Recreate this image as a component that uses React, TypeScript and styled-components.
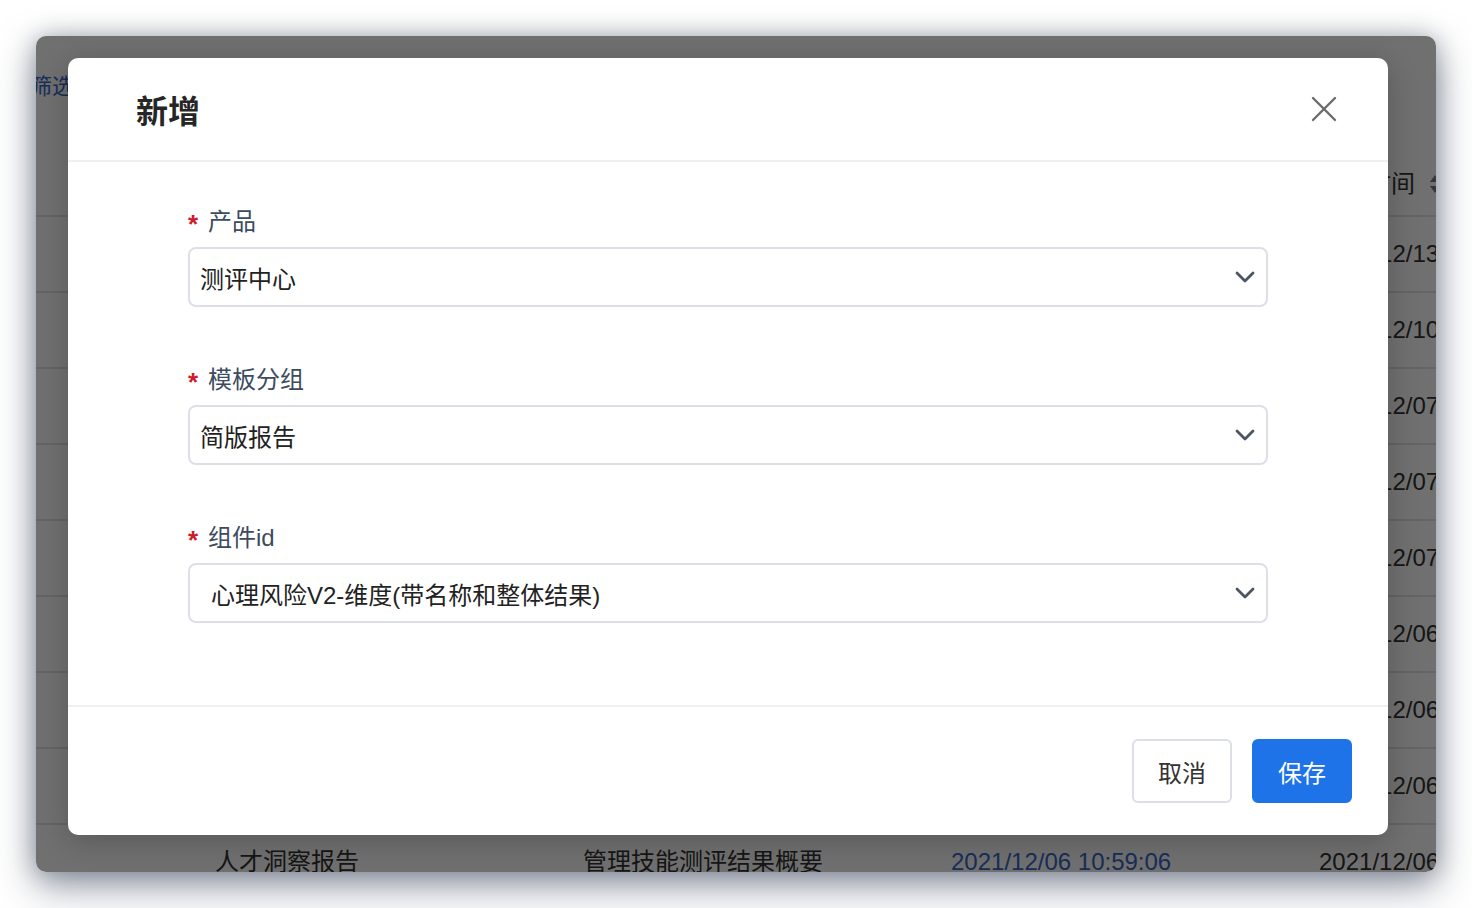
import React from "react";
import styled, { createGlobalStyle } from "styled-components";

const GlobalStyle = createGlobalStyle`
  html, body { margin: 0; padding: 0; background: #ffffff; }
  body { font-family: "Liberation Sans", "Noto Sans CJK SC", "Noto Sans", sans-serif; }
  * { box-sizing: border-box; }
`;

const Stage = styled.div`
  width: 1472px;
  height: 908px;
  padding: 36px;
  background: #ffffff;
  overflow: hidden;
`;

const Window = styled.div`
  position: relative;
  width: 1400px;
  height: 836px;
  border-radius: 10px;
  overflow: hidden;
  background: #ffffff;
  box-shadow: 0 14px 38px rgba(40, 52, 75, 0.5), 0 0 22px rgba(40, 52, 75, 0.3);
`;

const Page = styled.div`
  display: flex;
  flex-direction: column;
  height: 100%;
`;

const Toolbar = styled.div`
  height: 117px;
  flex-shrink: 0;
  padding-top: 35px;
  display: flex;
  align-items: flex-start;
`;

const FilterLink = styled.span`
  margin-left: -6px;
  font-size: 22px;
  line-height: 32px;
  color: #3a68c8;
`;

const Row = styled.div<{ $head?: boolean }>`
  display: grid;
  grid-template-columns: 179px repeat(4, 368px);
  height: ${(p) => (p.$head ? 64 : 76)}px;
  flex-shrink: 0;
  align-items: center;
  border-bottom: 2px solid #e2e4e8;
  background: #ffffff;
`;

const Cell = styled.div<{ $link?: boolean }>`
  display: flex;
  align-items: center;
  gap: 14px;
  font-size: 24px;
  line-height: 32px;
  white-space: nowrap;
  color: ${(p) => (p.$link ? "#3a68c8" : "#333333")};
`;

const SortIcon = () => (
  <svg width="12" height="20" viewBox="0 0 12 20">
    <path d="M6 1 L11 8 L1 8 Z" fill="#7d7d7d" />
    <path d="M6 19 L11 12 L1 12 Z" fill="#7d7d7d" />
  </svg>
);

const Overlay = styled.div`
  position: absolute;
  inset: 0;
  background: rgba(0, 0, 0, 0.56);
  display: flex;
  align-items: flex-start;
  padding: 22px 48px 0 32px;
`;

const Modal = styled.div`
  width: 1320px;
  background: #ffffff;
  border-radius: 10px;
  box-shadow: 0 6px 30px rgba(0, 0, 0, 0.22);
  display: flex;
  flex-direction: column;
`;

const ModalHeader = styled.div`
  height: 104px;
  display: flex;
  align-items: center;
  justify-content: space-between;
  padding: 0 50px 0 68px;
  border-bottom: 2px solid #eef0f3;
`;

const Title = styled.h2`
  margin: 0;
  padding-top: 6px;
  font-size: 32px;
  line-height: 1;
  font-weight: 700;
  color: #262626;
`;

const CloseButton = styled.button`
  border: 0;
  background: transparent;
  padding: 0;
  width: 28px;
  height: 28px;
  display: flex;
  align-items: center;
  justify-content: center;
  cursor: pointer;
`;

const ModalBody = styled.div`
  padding: 41px 120px 82px;
  display: flex;
  flex-direction: column;
  gap: 54px;
`;

const FormItem = styled.div`
  display: flex;
  flex-direction: column;
  gap: 12px;
`;

const Label = styled.label`
  display: flex;
  align-items: center;
  height: 32px;
  font-size: 24px;
  color: #3d4b5e;
`;

const Star = styled.span`
  width: 20px;
  font-size: 26px;
  font-weight: 700;
  line-height: 1;
  padding-top: 10px;
  color: #cc1d2e;
`;

const Select = styled.div<{ $indent: number }>`
  height: 60px;
  border: 2px solid #dcdfe5;
  border-radius: 8px;
  display: flex;
  align-items: center;
  justify-content: space-between;
  padding: 0 11px 0 ${(p) => p.$indent}px;
  font-size: 24px;
  color: #222222;
  white-space: nowrap;
`;

const ModalFooter = styled.div`
  border-top: 2px solid #eef0f3;
  padding: 32px 36px;
  display: flex;
  justify-content: flex-end;
  gap: 20px;
`;

const Button = styled.button<{ $primary?: boolean }>`
  width: 100px;
  height: 64px;
  border-radius: 6px;
  font-family: inherit;
  font-size: 24px;
  cursor: pointer;
  border: 2px solid ${(p) => (p.$primary ? "#1f73e8" : "#dcdfe5")};
  background: ${(p) => (p.$primary ? "#1f73e8" : "#ffffff")};
  color: ${(p) => (p.$primary ? "#ffffff" : "#333333")};
`;

const Chevron = () => (
  <svg width="20" height="12" viewBox="0 0 20 12">
    <polyline points="2,2 10,10 18,2" fill="none" stroke="#4b5563" strokeWidth="2.8" strokeLinecap="round" strokeLinejoin="round" />
  </svg>
);

const CloseIcon = () => (
  <svg width="26" height="26" viewBox="0 0 26 26">
    <line x1="2" y1="2" x2="24" y2="24" stroke="#6b6b6b" strokeWidth="2.4" strokeLinecap="round" />
    <line x1="24" y1="2" x2="2" y2="24" stroke="#6b6b6b" strokeWidth="2.4" strokeLinecap="round" />
  </svg>
);

const rows = [
  ["心理风险报告", "心理风险V2-维度", "2021/12/13 14:20:11", "2021/12/13 14:22:10"],
  ["领导力测评报告", "领导力结果概要", "2021/12/10 09:40:02", "2021/12/10 09:41:33"],
  ["职业性格报告", "性格维度得分", "2021/12/07 16:02:18", "2021/12/07 16:05:48"],
  ["职业兴趣报告", "兴趣类型分布", "2021/12/07 11:28:40", "2021/12/07 11:30:02"],
  ["通用能力报告", "能力结果概要", "2021/12/07 10:10:05", "2021/12/07 10:12:57"],
  ["人才洞察报告", "综合素质雷达图", "2021/12/06 18:40:19", "2021/12/06 18:44:21"],
  ["人才洞察报告", "岗位匹配度", "2021/12/06 15:18:44", "2021/12/06 15:20:09"],
  ["人才洞察报告", "发展建议", "2021/12/06 11:05:13", "2021/12/06 11:08:36"],
  ["人才洞察报告", "管理技能测评结果概要", "2021/12/06 10:59:06", "2021/12/06 10:59:06"],
];

const fields = [
  { label: "产品", value: "测评中心", indent: 10 },
  { label: "模板分组", value: "简版报告", indent: 10 },
  { label: "组件id", value: "心理风险V2-维度(带名称和整体结果)", indent: 21 },
];

export default function App() {
  return (
    <>
      <GlobalStyle />
      <Stage>
        <Window>
          <Page>
            <Toolbar>
              <FilterLink>筛选</FilterLink>
            </Toolbar>
            <Row $head>
              <Cell />
              <Cell>报告名称</Cell>
              <Cell>组件名称</Cell>
              <Cell>创建时间</Cell>
              <Cell>
                修改时间
                <SortIcon />
              </Cell>
            </Row>
            {rows.map((r, i) => (
              <Row key={i}>
                <Cell />
                <Cell>{r[0]}</Cell>
                <Cell>{r[1]}</Cell>
                <Cell $link>{r[2]}</Cell>
                <Cell>{r[3]}</Cell>
              </Row>
            ))}
          </Page>
          <Overlay>
            <Modal>
              <ModalHeader>
                <Title>新增</Title>
                <CloseButton aria-label="关闭">
                  <CloseIcon />
                </CloseButton>
              </ModalHeader>
              <ModalBody>
                {fields.map((f) => (
                  <FormItem key={f.label}>
                    <Label>
                      <Star>*</Star>
                      {f.label}
                    </Label>
                    <Select $indent={f.indent}>
                      <span>{f.value}</span>
                      <Chevron />
                    </Select>
                  </FormItem>
                ))}
              </ModalBody>
              <ModalFooter>
                <Button>取消</Button>
                <Button $primary>保存</Button>
              </ModalFooter>
            </Modal>
          </Overlay>
        </Window>
      </Stage>
    </>
  );
}
